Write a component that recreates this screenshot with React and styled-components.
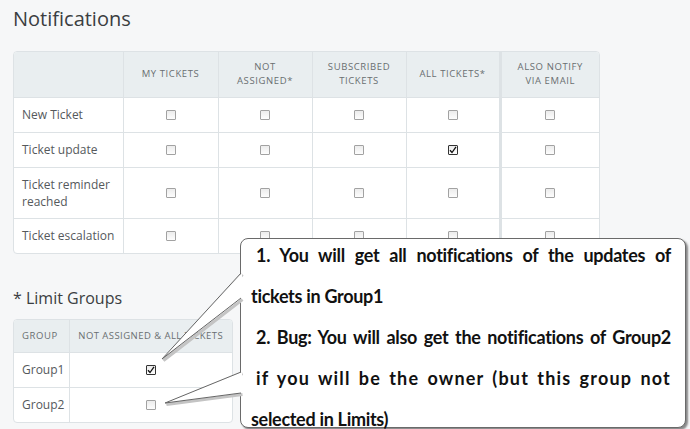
import React from 'react';
import styled, { createGlobalStyle } from 'styled-components';

const GlobalStyle = createGlobalStyle`
  html, body {
    margin: 0;
    padding: 0;
    background: #f6f7f8;
  }
  body {
    font-family: 'Open Sans', 'Noto Sans', sans-serif;
    color: #585c5f;
  }
`;

const events = [
  { label: 'New Ticket', checked: [] },
  { label: 'Ticket update', checked: [3] },
  { label: 'Ticket reminder reached', checked: [], tall: true },
  { label: 'Ticket escalation', checked: [] }
];

const columns = [
  ['MY TICKETS'],
  ['NOT', 'ASSIGNED*'],
  ['SUBSCRIBED', 'TICKETS'],
  ['ALL TICKETS*'],
  ['ALSO NOTIFY', 'VIA EMAIL']
];

const groups = [
  { name: 'Group1', checked: true },
  { name: 'Group2', checked: false }
];

const calloutLines = [
  { text: '1. You will get all notifications of the updates of', justify: true, indent: true },
  { text: 'tickets in Group1' },
  { text: '2. Bug: You will also get the notifications of Group2', justify: true, indent: true },
  { text: 'if you will be the owner (but this group not', justify: true, indent: true, spread: true },
  { text: 'selected in Limits)' }
];

function Checkbox({ checked }) {
  return (
    <Box checked={checked}>
      {checked && (
        <svg width="8" height="8" viewBox="0 0 8 8">
          <path d="M1 4.2 L3 6.5 L7 0.8" fill="none" stroke="#111" strokeWidth="1.3" />
        </svg>
      )}
    </Box>
  );
}

function App() {
  return (
    <Page>
      <GlobalStyle />
      <Title>Notifications</Title>
      <TableFrame width={587} gap={19}>
        <Table>
          <colgroup>
            <col style={{ width: 109 }} />
            <col style={{ width: 95 }} />
            <col style={{ width: 94 }} />
            <col style={{ width: 94 }} />
            <col style={{ width: 94 }} />
            <col style={{ width: 99 }} />
          </colgroup>
          <thead>
            <HeadRow height={45}>
              <Th />
              {columns.map((lines, i) => (
                <Th key={lines[0]} thick={i === 4}>
                  {lines.map((l) => (
                    <div key={l}>{l}</div>
                  ))}
                </Th>
              ))}
            </HeadRow>
          </thead>
          <tbody>
            {events.map((ev) => (
              <BodyRow key={ev.label} height={ev.tall ? 51 : 35}>
                <LabelCell>{ev.label}</LabelCell>
                {columns.map((c, i) => (
                  <Td key={c[0]} thick={i === 4}>
                    <Checkbox checked={ev.checked.includes(i)} />
                  </Td>
                ))}
              </BodyRow>
            ))}
          </tbody>
        </Table>
      </TableFrame>

      <Subtitle>* Limit Groups</Subtitle>
      <TableFrame width={220} gap={0}>
        <Table>
          <colgroup>
            <col style={{ width: 55 }} />
            <col />
          </colgroup>
          <thead>
            <HeadRow height={32}>
              <Th align="left">GROUP</Th>
              <Th tight>NOT ASSIGNED &amp; ALL TICKETS</Th>
            </HeadRow>
          </thead>
          <tbody>
            {groups.map((g) => (
              <BodyRow key={g.name} height={35}>
                <LabelCell>{g.name}</LabelCell>
                <Td>
                  <Checkbox checked={g.checked} />
                </Td>
              </BodyRow>
            ))}
          </tbody>
        </Table>
      </TableFrame>

      <Callout>
        {calloutLines.map((l) => (
          <CalloutLine key={l.text} justify={l.justify} indent={l.indent} spread={l.spread}>
            {l.text}
          </CalloutLine>
        ))}
      </Callout>
      <Tails width="100" height="200" viewBox="0 0 100 200">
        <polyline points="86,35 7,121 86,60" fill="none" stroke="#c4c4c4" strokeWidth="3" transform="translate(1.5,1.5)" />
        <polygon points="87,35 7,121 87,60" fill="#fff" />
        <polyline points="86,35 7,121 86,60" fill="none" stroke="#666" strokeWidth="1" />
        <polyline points="86,134 10,165 86,155" fill="none" stroke="#c4c4c4" strokeWidth="3" transform="translate(1.5,1.5)" />
        <polygon points="87,134 10,165 87,155" fill="#fff" />
        <polyline points="86,134 10,165 86,155" fill="none" stroke="#666" strokeWidth="1" />
      </Tails>
    </Page>
  );
}

const Page = styled.div`
  position: relative;
  width: 690px;
  height: 429px;
  overflow: hidden;
  padding: 6px 0 0 13px;
  box-sizing: border-box;
`;

const Title = styled.h1`
  margin: 0;
  font-size: 20px;
  font-weight: 400;
  line-height: 26px;
  color: #3b3e41;
`;

const Subtitle = styled.h2`
  margin: 33px 0 0;
  font-size: 16px;
  font-weight: 400;
  line-height: 22px;
  color: #3b3e41;
  height: 32px;
`;

const TableFrame = styled.div`
  width: ${(p) => p.width}px;
  box-sizing: border-box;
  border: 1px solid #dde2e5;
  border-radius: 4px;
  overflow: hidden;
  margin-top: ${(p) => p.gap}px;
  background: #fff;
`;

const Table = styled.table`
  width: 100%;
  border-collapse: collapse;
  table-layout: fixed;
`;

const HeadRow = styled.tr`
  height: ${(p) => p.height}px;
  background: #e9eef0;
`;

const BodyRow = styled.tr`
  height: ${(p) => p.height}px;
  border-top: 1px solid #dde2e5;
`;

const Th = styled.th`
  padding: 0 ${(p) => (p.tight ? 2 : 8)}px;
  font-size: 9.5px;
  font-weight: 500;
  letter-spacing: ${(p) => (p.tight ? 0.45 : 0.6)}px;
  line-height: 14px;
  color: #6a6e71;
  white-space: ${(p) => (p.tight ? 'nowrap' : 'normal')};
  text-align: ${(p) => p.align || 'center'};
  vertical-align: middle;
  border-left: ${(p) => (p.thick ? 3 : 1)}px solid #dde2e5;
  &:first-child {
    border-left: none;
  }
`;

const Td = styled.td`
  text-align: center;
  vertical-align: middle;
  border-left: ${(p) => (p.thick ? 3 : 1)}px solid #dde2e5;
  padding: 0;
  line-height: 0;
`;

const LabelCell = styled.td`
  padding: 0 8px;
  font-size: 12px;
  line-height: 17px;
  color: #55595c;
  vertical-align: middle;
`;

const Box = styled.span`
  display: inline-flex;
  align-items: center;
  justify-content: center;
  width: 10px;
  height: 10px;
  box-sizing: border-box;
  border: 1px solid ${(p) => (p.checked ? '#333' : '#a2a2a2')};
  background: linear-gradient(#ececec, #fdfdfd);
  border-radius: 1px;
`;

const Callout = styled.div`
  position: absolute;
  left: 240px;
  top: 238px;
  width: 446px;
  height: 190px;
  box-sizing: border-box;
  padding: 0 14px 0 10px;
  background: #fff;
  border: 1px solid #6a6a6a;
  border-radius: 8px;
  box-shadow: 2px 2px 2px rgba(0, 0, 0, 0.45);
  font-family: Lato, 'Open Sans', sans-serif;
  font-weight: 700;
  font-size: 18px;
  color: #111;
`;

const CalloutLine = styled.div`
  line-height: 22px;
  padding: 9.5px 0 9.5px ${(p) => (p.indent ? 5 : 0)}px;
  white-space: nowrap;
  text-align: ${(p) => (p.justify ? 'justify' : 'left')};
  text-align-last: ${(p) => (p.justify ? 'justify' : 'left')};
  letter-spacing: ${(p) => (p.spread ? 1.2 : -0.3)}px;
  &:first-child {
    margin-top: -5px;
  }
  &:last-child {
    padding-bottom: 0;
  }
`;

const Tails = styled.svg`
  position: absolute;
  left: 155px;
  top: 238px;
  overflow: visible;
`;

export default App;
